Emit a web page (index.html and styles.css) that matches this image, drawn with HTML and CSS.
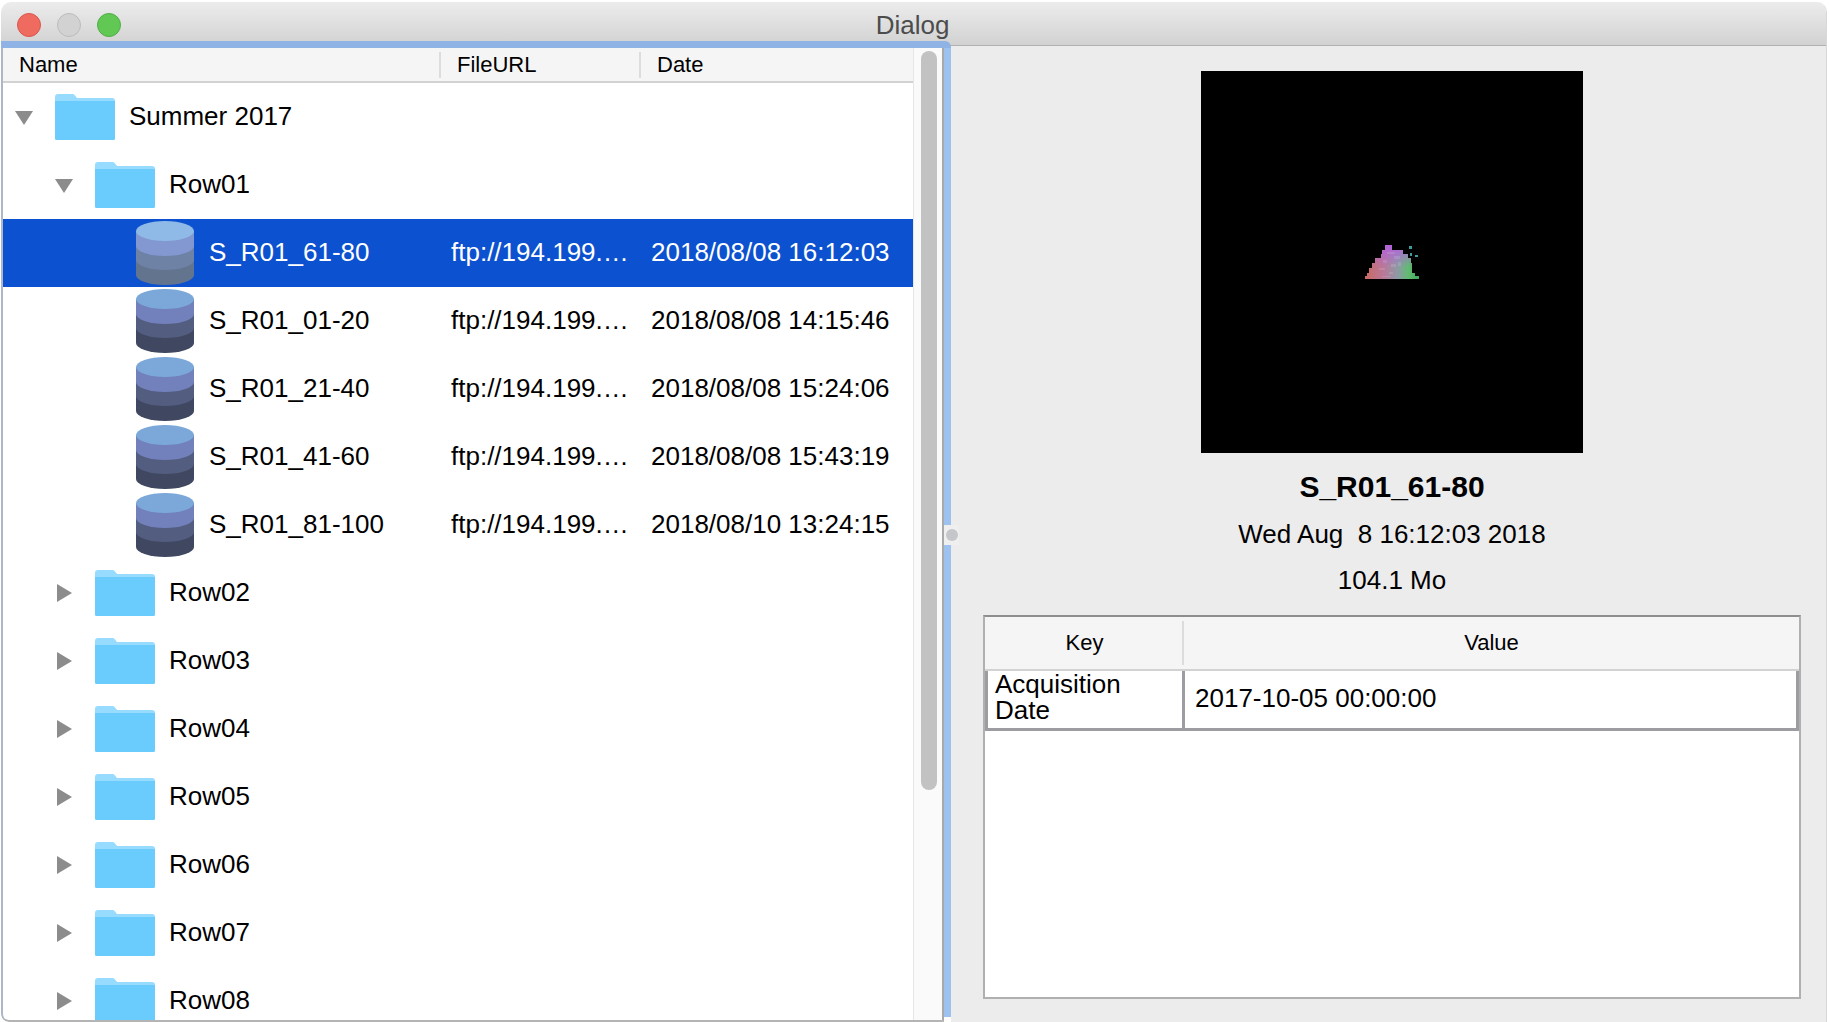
FILE: index.html
```html
<!DOCTYPE html>
<html lang="en">
<head>
    <meta charset="UTF-8">
    <meta name="viewport" content="width=device-width, initial-scale=1.0">
    <title>Dialog</title>
    <link rel="stylesheet" href="styles.css">
</head>
<body>
    <svg class="defs">
        <symbol id="folder" viewBox="0 0 60 46">
            <path class="folder-tab" d="M0 3 Q0 0 3 0 H18 Q19 0 20 1.5 L22 4 H57 Q60 4 60 7 V12 H0 Z"/>
            <path class="folder-body" d="M0 7 H60 V44.5 Q60 46 58.5 46 H1.5 Q0 46 0 44.5 Z"/>
        </symbol>
        <symbol id="disk" viewBox="0 0 58 64">
            <path class="disk-4" d="M0 10 V54 A29 10 0 0 0 58 54 V10 Z"/>
            <path class="disk-3" d="M0 10 V39 A29 10 0 0 0 58 39 V10 Z"/>
            <path class="disk-2" d="M0 10 V25 A29 10 0 0 0 58 25 V10 Z"/>
            <ellipse class="disk-1" cx="29" cy="10" rx="29" ry="10"/>
        </symbol>
    </svg>

    <div class="window">
        <div class="titlebar">
            <div class="lights">
                <span class="light red"></span>
                <span class="light grey"></span>
                <span class="light green"></span>
            </div>
            <div class="title">Dialog</div>
        </div>

        <div class="main">
            <div class="left">
                <div class="tree">
                    <div class="tree-main">
                        <div class="tree-header">
                            <div class="col-name">Name</div>
                            <div class="col-url">FileURL</div>
                            <div class="col-date">Date</div>
                        </div>
                        <div class="rows">
                            <div class="row">
                                <div class="col-name level-0"><span class="arrow open"></span><svg class="icon"><use href="#folder"/></svg><span class="label">Summer 2017</span></div>
                            </div>
                            <div class="row">
                                <div class="col-name level-1"><span class="arrow open"></span><svg class="icon"><use href="#folder"/></svg><span class="label">Row01</span></div>
                            </div>
                            <div class="row selected">
                                <div class="col-name level-2"><span class="arrow"></span><svg class="icon"><use href="#disk"/></svg><span class="label">S_R01_61-80</span></div>
                                <div class="col-url">ftp://194.199.…</div>
                                <div class="col-date">2018/08/08 16:12:03</div>
                            </div>
                            <div class="row">
                                <div class="col-name level-2"><span class="arrow"></span><svg class="icon"><use href="#disk"/></svg><span class="label">S_R01_01-20</span></div>
                                <div class="col-url">ftp://194.199.…</div>
                                <div class="col-date">2018/08/08 14:15:46</div>
                            </div>
                            <div class="row">
                                <div class="col-name level-2"><span class="arrow"></span><svg class="icon"><use href="#disk"/></svg><span class="label">S_R01_21-40</span></div>
                                <div class="col-url">ftp://194.199.…</div>
                                <div class="col-date">2018/08/08 15:24:06</div>
                            </div>
                            <div class="row">
                                <div class="col-name level-2"><span class="arrow"></span><svg class="icon"><use href="#disk"/></svg><span class="label">S_R01_41-60</span></div>
                                <div class="col-url">ftp://194.199.…</div>
                                <div class="col-date">2018/08/08 15:43:19</div>
                            </div>
                            <div class="row">
                                <div class="col-name level-2"><span class="arrow"></span><svg class="icon"><use href="#disk"/></svg><span class="label">S_R01_81-100</span></div>
                                <div class="col-url">ftp://194.199.…</div>
                                <div class="col-date">2018/08/10 13:24:15</div>
                            </div>
                            <div class="row">
                                <div class="col-name level-1"><span class="arrow closed"></span><svg class="icon"><use href="#folder"/></svg><span class="label">Row02</span></div>
                            </div>
                            <div class="row">
                                <div class="col-name level-1"><span class="arrow closed"></span><svg class="icon"><use href="#folder"/></svg><span class="label">Row03</span></div>
                            </div>
                            <div class="row">
                                <div class="col-name level-1"><span class="arrow closed"></span><svg class="icon"><use href="#folder"/></svg><span class="label">Row04</span></div>
                            </div>
                            <div class="row">
                                <div class="col-name level-1"><span class="arrow closed"></span><svg class="icon"><use href="#folder"/></svg><span class="label">Row05</span></div>
                            </div>
                            <div class="row">
                                <div class="col-name level-1"><span class="arrow closed"></span><svg class="icon"><use href="#folder"/></svg><span class="label">Row06</span></div>
                            </div>
                            <div class="row">
                                <div class="col-name level-1"><span class="arrow closed"></span><svg class="icon"><use href="#folder"/></svg><span class="label">Row07</span></div>
                            </div>
                            <div class="row">
                                <div class="col-name level-1"><span class="arrow closed"></span><svg class="icon"><use href="#folder"/></svg><span class="label">Row08</span></div>
                            </div>
                        </div>
                    </div>
                    <div class="scrollbar"><div class="thumb"></div></div>
                </div>
                <div class="focus-strip"></div>
                <div class="splitter"><span class="splitter-dot"></span></div>
            </div>

            <div class="details">
                <svg class="preview" viewBox="0 0 382 382">
                    <defs>
                        <linearGradient id="plotX" gradientUnits="userSpaceOnUse" x1="164" y1="0" x2="218" y2="0">
                            <stop offset="0" stop-color="#c96a62"/>
                            <stop offset="0.35" stop-color="#b9789a"/>
                            <stop offset="0.6" stop-color="#8e9aa6"/>
                            <stop offset="0.8" stop-color="#62bb72"/>
                            <stop offset="1" stop-color="#3fa85a"/>
                        </linearGradient>
                        <linearGradient id="plotY" gradientUnits="userSpaceOnUse" x1="0" y1="174" x2="0" y2="196">
                            <stop offset="0" stop-color="#b45fe0" stop-opacity="0.95"/>
                            <stop offset="1" stop-color="#b45fe0" stop-opacity="0"/>
                        </linearGradient>
                    </defs>
                    <path fill="url(#plotX)" d="M184 174 H191 V179 H202 V183 H207 V187 H210 V192 H211 V202 H214 V205 H218 V208 H164 V205 H166 V202 H168 V197 H171 V192 H174 V187 H180 V183 H181 V179 H184 Z"/>
                    <path fill="url(#plotY)" d="M184 174 H191 V179 H202 V183 H207 V187 H210 V192 H211 V197 H171 V192 H174 V187 H180 V183 H181 V179 H184 Z"/>
                    <g class="plot-noise">
                        <rect x="186" y="181" width="8" height="2"/>
                        <rect x="193" y="185" width="6" height="3"/>
                        <rect x="182" y="189" width="4" height="3"/>
                        <rect x="190" y="193" width="5" height="3"/>
                        <rect x="197" y="191" width="3" height="4"/>
                        <rect x="178" y="197" width="6" height="2"/>
                        <rect x="188" y="201" width="4" height="2"/>
                        <rect x="181" y="205" width="8" height="1"/>
                    </g>
                    <g class="plot-dots">
                        <rect x="208" y="175" width="3" height="3"/>
                        <rect x="214" y="184" width="3" height="2"/>
                        <rect x="209" y="182" width="2" height="3"/>
                    </g>
                </svg>
                <div class="file-name">S_R01_61-80</div>
                <div class="file-info">Wed Aug  8 16:12:03 2018</div>
                <div class="file-info">104.1 Mo</div>

                <div class="meta-table">
                    <div class="meta-header">
                        <div class="meta-key">Key</div>
                        <div class="meta-value">Value</div>
                    </div>
                    <div class="meta-row">
                        <div class="meta-cell-key">Acquisition Date</div>
                        <div class="meta-cell-value">2017-10-05 00:00:00</div>
                    </div>
                </div>
            </div>
        </div>
    </div>
</body>
</html>
```

FILE: styles.css
```css
body {
    margin: 0;
    height: 1022px;
    overflow: hidden;
    background-color: white;
    font-family: "Liberation Sans", Arial, sans-serif;
    color: black;
}
.defs {
    display: none;
}
.window {
    display: flex;
    flex-direction: column;
    box-sizing: border-box;
    width: 1826px;
    height: 1020px;
    margin: 2px 0 0 1px;
    border-right: 1px solid #d8d8d8;
    border-radius: 10px 10px 0 8px;
    overflow: hidden;
}

/* title bar */
.titlebar {
    display: grid;
    grid-template-columns: 1fr auto 1fr;
    align-items: center;
    box-sizing: border-box;
    height: 44px;
    padding-left: 16px;
    background: linear-gradient(#ececec, #d2d2d2);
    border-bottom: 1px solid #b1b1b1;
}
.lights {
    display: flex;
    gap: 16px;
    margin-top: 2px;
}
.light {
    box-sizing: border-box;
    width: 24px;
    height: 24px;
    border-radius: 50%;
    border: 1px solid;
}
.light.red {
    background-color: #ef6b60;
    border-color: #d9574e;
}
.light.grey {
    background-color: #d2d2d2;
    border-color: #bcbcbc;
}
.light.green {
    background-color: #61c854;
    border-color: #52ad47;
}
.title {
    font-size: 26px;
    line-height: 30px;
    color: #4c4c4c;
    margin: 2px 0 0 -18px;
}

/* main */
.main {
    flex: 1;
    display: flex;
    min-height: 0;
    margin-top: -5px;
}
.left {
    position: relative;
    display: flex;
    flex: none;
    width: 950px;
    border-top: 7px solid #8fb3e4;
    border-top-right-radius: 6px;
}
.tree {
    display: flex;
    flex: 1;
    min-width: 0;
    border-left: 2px solid #aeb7c8;
    border-right: 2px solid #a9a9a9;
    border-bottom: 2px solid #b4b4b4;
    border-bottom-left-radius: 8px;
    background-color: white;
}
.focus-strip {
    flex: none;
    width: 7px;
    margin-bottom: 5px;
    background-color: #9dc2f0;
}
.splitter {
    position: absolute;
    top: 477px;
    right: -8px;
    display: flex;
    align-items: center;
    justify-content: center;
    width: 15px;
    height: 20px;
    background-color: #efefef;
}
.splitter-dot {
    width: 12px;
    height: 12px;
    border-radius: 50%;
    background-color: #c4c6c9;
}
.tree-main {
    display: flex;
    flex-direction: column;
    flex: 1;
    min-width: 0;
}
.tree-header {
    display: flex;
    flex: none;
    box-sizing: border-box;
    height: 35px;
    align-items: center;
    font-size: 22px;
    background-color: #f5f5f5;
    border-bottom: 2px solid #d2d2d2;
}
.tree-header .col-name {
    width: 436px;
    padding-left: 16px;
}
.tree-header .col-url {
    padding-left: 16px;
    border-left: 2px solid #dcdcdc;
}
.tree-header .col-date {
    padding-left: 16px;
    border-left: 2px solid #dcdcdc;
}
.col-name {
    box-sizing: border-box;
    flex: none;
    width: 437px;
    display: flex;
    align-items: center;
}
.col-url {
    box-sizing: border-box;
    flex: none;
    width: 200px;
    padding-left: 11px;
}
.col-date {
    box-sizing: border-box;
    flex: 1;
    padding-left: 11px;
}
.rows {
    flex: 1;
    min-height: 0;
    overflow: hidden;
}
.row {
    display: flex;
    align-items: center;
    height: 68px;
    font-size: 26px;
    --folder-tab: #97dbfe;
    --folder-body: #69ccfc;
    --disk-1: #7ba8d9;
    --disk-2: #7280bb;
    --disk-3: #525d80;
    --disk-4: #3f4860;
}
.row .label,
.row .col-url,
.row .col-date {
    padding-bottom: 2px;
}
.row.selected {
    background-color: #0c51cf;
    color: white;
    --disk-1: #8fb9e6;
    --disk-2: #8398d0;
    --disk-3: #6e82a6;
    --disk-4: #63748f;
}
.level-0 {
    padding-left: 12px;
}
.level-1 {
    padding-left: 52px;
}
.level-2 {
    padding-left: 92px;
}
.arrow {
    flex: none;
    box-sizing: border-box;
    width: 18px;
    height: 18px;
    margin-right: 22px;
}
.arrow.open {
    border-top: 14px solid #8c8c8c;
    border-left: 9px solid transparent;
    border-right: 9px solid transparent;
    margin-top: 1px;
    height: 14px;
}
.arrow.closed {
    border-left: 15px solid #8c8c8c;
    border-top: 9px solid transparent;
    border-bottom: 9px solid transparent;
    margin-left: 2px;
    width: 15px;
    margin-right: 23px;
}
.icon {
    flex: none;
    width: 60px;
    height: 46px;
    margin-right: 14px;
}
.level-2 .icon {
    width: 58px;
    height: 64px;
    margin-left: 1px;
    margin-right: 15px;
}
.folder-tab {
    fill: var(--folder-tab);
}
.folder-body {
    fill: var(--folder-body);
}
.disk-1 {
    fill: var(--disk-1);
}
.disk-2 {
    fill: var(--disk-2);
}
.disk-3 {
    fill: var(--disk-3);
}
.disk-4 {
    fill: var(--disk-4);
}
.scrollbar {
    flex: none;
    box-sizing: border-box;
    width: 29px;
    padding: 3px 0 0 7px;
    background-color: #fafafa;
    border-left: 1px solid #e6e6e6;
}
.thumb {
    width: 16px;
    height: 739px;
    border-radius: 8px;
    background-color: #c2c2c2;
}

/* right side */
.details {
    flex: 1;
    min-width: 0;
    display: flex;
    flex-direction: column;
    align-items: center;
    box-sizing: border-box;
    margin-top: 5px;
    padding: 25px 25px 23px 32px;
    background-color: #ececec;
}
.preview {
    flex: none;
    width: 382px;
    height: 382px;
    margin-bottom: 10px;
    background-color: black;
}
.plot-noise rect {
    fill: #ffffff;
    fill-opacity: 0.12;
}
.plot-dots rect {
    fill: #3f9a9c;
}
.file-name {
    font-size: 30px;
    font-weight: bold;
    line-height: 47px;
    margin-bottom: 1px;
}
.file-info {
    font-size: 26px;
    line-height: 46px;
    white-space: pre;
}
.meta-table {
    flex: 1;
    align-self: stretch;
    margin-top: 12px;
    background-color: white;
    border: 2px solid #b0b0b0;
    border-top-color: #8e8e8e;
}
.meta-header {
    display: flex;
    align-items: center;
    box-sizing: border-box;
    height: 54px;
    font-size: 22px;
    text-align: center;
    background-color: #f5f5f5;
    border-bottom: 2px solid #d2d2d2;
}
.meta-key {
    box-sizing: border-box;
    width: 199px;
    padding-left: 2px;
    line-height: 44px;
    border-right: 2px solid #dcdcdc;
}
.meta-value {
    flex: 1;
}
.meta-row {
    display: flex;
    box-sizing: border-box;
    height: 60px;
    font-size: 26px;
    line-height: 26px;
    border: 3px solid #9d9da1;
    border-top: none;
}
.meta-cell-key {
    box-sizing: border-box;
    display: flex;
    align-items: center;
    width: 197px;
    padding: 0 0 6px 7px;
    border-right: 3px solid #9d9da1;
}
.meta-cell-value {
    flex: 1;
    display: flex;
    align-items: center;
    padding: 0 0 4px 10px;
}
```
